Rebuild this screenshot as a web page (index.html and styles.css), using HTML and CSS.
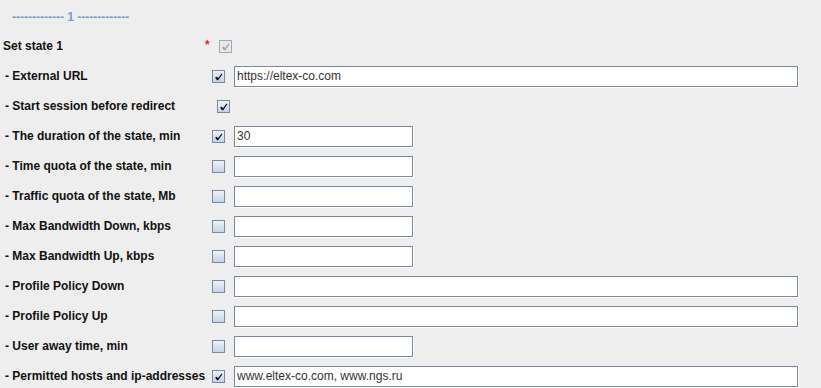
FILE: index.html
```html
<!DOCTYPE html>
<html lang="en">
<head>
    <meta charset="UTF-8">
    <title>State settings</title>
    <link rel="stylesheet" href="styles.css">
</head>
<body>
    <div class="form">
        <div class="legend">------------- 1 -------------</div>

        <div class="row">
            <span class="label main">Set state 1</span>
            <span class="req">*</span>
            <span class="cb checked disabled"><svg viewBox="0 0 11 11"><path d="M2 6.5 L4 5.8 L5 7.2 L8.6 2.6 L9.4 3.2 L5.2 9.2 L4 9.2 Z"/></svg></span>
        </div>
        <div class="row">
            <span class="label">- External URL</span>
            <span class="cb checked"><svg viewBox="0 0 11 11"><path d="M2 6.5 L4 5.8 L5 7.2 L8.6 2.6 L9.4 3.2 L5.2 9.2 L4 9.2 Z"/></svg></span>
            <input class="field wide" type="text" value="https://eltex-co.com">
        </div>
        <div class="row">
            <span class="label">- Start session before redirect</span>
            <span class="cb checked shift"><svg viewBox="0 0 11 11"><path d="M2 6.5 L4 5.8 L5 7.2 L8.6 2.6 L9.4 3.2 L5.2 9.2 L4 9.2 Z"/></svg></span>
        </div>
        <div class="row">
            <span class="label">- The duration of the state, min</span>
            <span class="cb checked"><svg viewBox="0 0 11 11"><path d="M2 6.5 L4 5.8 L5 7.2 L8.6 2.6 L9.4 3.2 L5.2 9.2 L4 9.2 Z"/></svg></span>
            <input class="field short" type="text" value="30">
        </div>
        <div class="row">
            <span class="label">- Time quota of the state, min</span>
            <span class="cb"></span>
            <input class="field short" type="text">
        </div>
        <div class="row">
            <span class="label">- Traffic quota of the state, Mb</span>
            <span class="cb"></span>
            <input class="field short" type="text">
        </div>
        <div class="row">
            <span class="label">- Max Bandwidth Down, kbps</span>
            <span class="cb"></span>
            <input class="field short" type="text">
        </div>
        <div class="row">
            <span class="label">- Max Bandwidth Up, kbps</span>
            <span class="cb"></span>
            <input class="field short" type="text">
        </div>
        <div class="row">
            <span class="label">- Profile Policy Down</span>
            <span class="cb"></span>
            <input class="field wide" type="text">
        </div>
        <div class="row">
            <span class="label">- Profile Policy Up</span>
            <span class="cb"></span>
            <input class="field wide" type="text">
        </div>
        <div class="row">
            <span class="label">- User away time, min</span>
            <span class="cb"></span>
            <input class="field short" type="text">
        </div>
        <div class="row">
            <span class="label">- Permitted hosts and ip-addresses</span>
            <span class="cb checked"><svg viewBox="0 0 11 11"><path d="M2 6.5 L4 5.8 L5 7.2 L8.6 2.6 L9.4 3.2 L5.2 9.2 L4 9.2 Z"/></svg></span>
            <input class="field wide" type="text" value="www.eltex-co.com, www.ngs.ru">
        </div>
    </div>
</body>
</html>
```

FILE: styles.css
```css
body { margin: 0; background: #eeeeee; font-family: "Liberation Sans", Arial, sans-serif; font-size: 12px; color: #000; }
.form { padding: 0; }
.legend { height: 31px; line-height: 34px; padding-left: 12px; color: #7a9cc8; font-weight: bold; }
.row { height: 30px; display: flex; align-items: center; }
.label { box-sizing: border-box; width: 212px; padding-left: 5px; font-weight: bold; white-space: nowrap; color: #111; }
.label.main { width: 205px; padding-left: 3px; }
.req { width: 14px; color: #ff2020; font-weight: bold; font-size: 12px; line-height: 12px; margin-top: -2px; }
.cb { box-sizing: border-box; width: 13px; height: 13px; border: 1px solid #7a8a9c; background: linear-gradient(#eef2f8, #c4d3e5); display: inline-flex; align-items: center; justify-content: center; margin-top: 1px; }
.cb svg { width: 11px; height: 11px; display: block; }
.cb path { fill: #111; stroke: none; }
.cb.disabled { border-color: #a0abb7; background: #e6e8eb; }
.cb.disabled path { fill: #9aa2ab; }
.cb.shift { margin-left: 5px; }
.field { box-sizing: border-box; height: 21px; margin: 0 0 0 9px; padding: 0 2px; border: 1px solid #7a8a9c; background: #fff; box-shadow: 1px 1px 0 #fff; font-family: "Liberation Sans", Arial, sans-serif; font-size: 12px; color: #333; outline: none; }
.field.wide { width: 564px; }
.field.short { width: 179px; }
```
